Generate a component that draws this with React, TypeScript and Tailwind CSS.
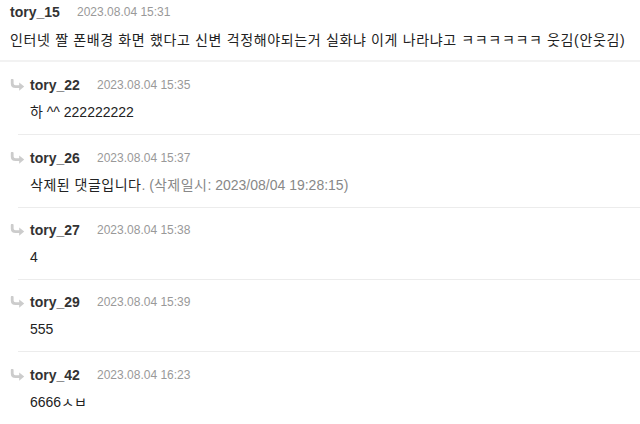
const font = { fontFamily: '"Liberation Sans", "Noto Sans CJK KR", sans-serif' };

type Reply = {
	name: string;
	date: string;
	body: React.ReactNode;
};

const replies: Reply[] = [
	{ name: "tory_22", date: "2023.08.04 15:35", body: "하 ^^ 222222222" },
	{
		name: "tory_26",
		date: "2023.08.04 15:37",
		body: (
			<>
				<span className="tracking-[0.5px]">삭제된 댓글입니다</span>
				<span className="text-[#888]">
					. (<span className="tracking-[0.5px]">삭제일시</span>: 2023/08/04 19:28:15)
				</span>
			</>
		),
	},
	{ name: "tory_27", date: "2023.08.04 15:38", body: "4" },
	{ name: "tory_29", date: "2023.08.04 15:39", body: "555" },
	{ name: "tory_42", date: "2023.08.04 16:23", body: "6666ㅅㅂ" },
];

// top padding per reply, keeps the rows on the reference's ~72.5px pitch
const topPad = ["pt-[13px]", "pt-[13px]", "pt-[12px]", "pt-[12px]", "pt-[13px]"];

function ReplyArrow() {
	return (
		<svg width="15" height="12" viewBox="0 0 15 12" className="shrink-0">
			<path
				d="M2.2 1.2 V4.5 Q2.2 7.6 5.5 7.6 H10"
				fill="none"
				stroke="#cccccc"
				strokeWidth="2.8"
				strokeLinecap="round"
			/>
			<path d="M9.2 3.4 L14.2 7.6 L9.2 11.8 Z" fill="#cccccc" />
		</svg>
	);
}

function Header({ name, date }: { name: string; date: string }) {
	return (
		<div className="flex h-5 items-center">
			<span className="w-[67px] text-[14px] font-bold text-[#333]">{name}</span>
			<span className="text-[12px] text-[#999]">{date}</span>
		</div>
	);
}

export default function App() {
	return (
		<div className="h-[424px] w-[640px] overflow-hidden bg-white" style={font}>
			<div className="px-[10px] pt-[2px]">
				<Header name="tory_15" date="2023.08.04 15:31" />
				<div className="mt-[8px] h-5 whitespace-nowrap text-[14px] leading-5 tracking-[0.65px] text-[#222]">
					인터넷 짤 폰배경 화면 했다고 신변 걱정해야되는거 실화냐 이게 나라냐고 ㅋㅋㅋㅋㅋㅋ 웃김(안웃김)
				</div>
			</div>
			<div className="mt-[10px] h-[2px] bg-[#f2f2f2]" />
			{replies.map((r, i) => (
				<div key={r.name}>
					<div className={`pl-[10px] ${topPad[i]}`}>
						<div className="flex items-center gap-[5px]">
							<ReplyArrow />
							<Header name={r.name} date={r.date} />
						</div>
						<div className="mt-[7px] h-5 pl-[20px] text-[14px] leading-5 text-[#222]">{r.body}</div>
					</div>
					{i < replies.length - 1 && <div className="ml-[18px] mt-[12px] h-px bg-[#ececec]" />}
				</div>
			))}
		</div>
	);
}
